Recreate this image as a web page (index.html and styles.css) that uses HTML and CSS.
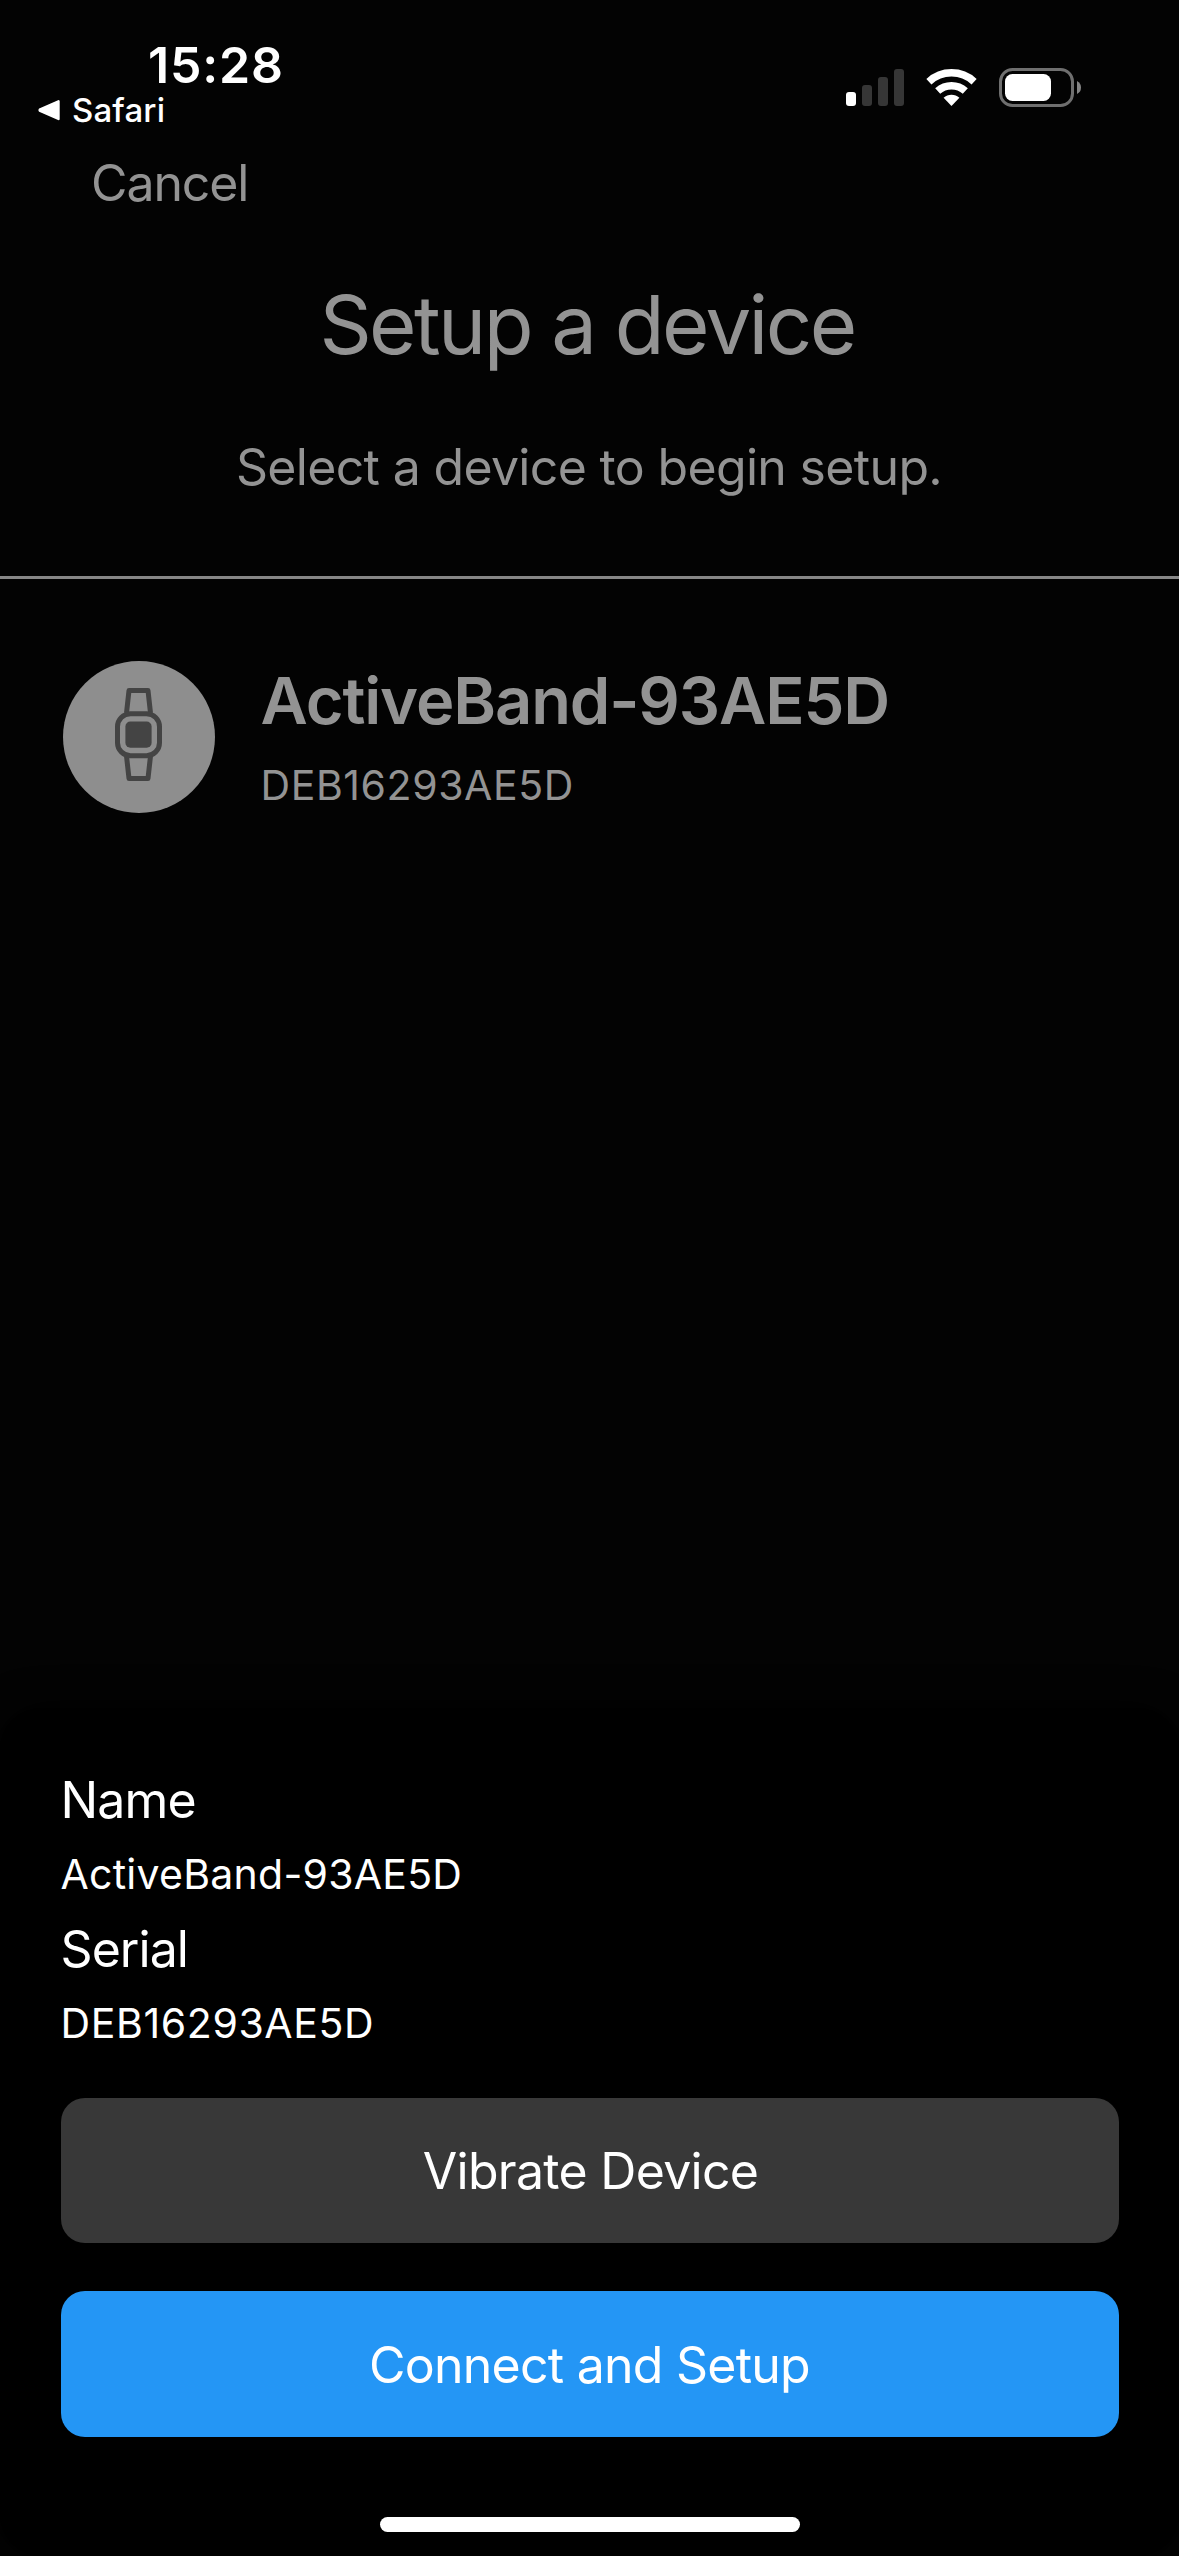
FILE: index.html
```
<!DOCTYPE html>
<html lang="en">
<head>
<meta charset="utf-8">
<title>Setup a device</title>
<link rel="stylesheet" href="styles.css">
</head>
<body>
<div class="screen">
  <header class="status-bar">
    <div class="status-left">
      <div class="time">15:28</div>
      <div class="back-app">
        <svg class="back-arrow" viewBox="0 0 22 22"><path d="M20.5 2.3V20L2.2 12Q1 11.2 2.2 10.3Z" fill="#fff" stroke="#fff" stroke-width="2.4" stroke-linejoin="round"/></svg>
        <span>Safari</span>
      </div>
    </div>
    <div class="status-icons">
      <svg class="signal" viewBox="0 0 58 37"><rect x="0" y="23" width="10" height="14" rx="3" fill="#fff"/><g fill="#363636"><rect x="16" y="16" width="10" height="21" rx="3"/><rect x="32" y="8" width="10" height="29" rx="3"/><rect x="48" y="0" width="10" height="37" rx="3"/></g></svg>
      <svg class="wifi" viewBox="0 0 51 37"><g fill="none" stroke="#fff" stroke-width="7.5"><path d="M2.9 12.7A33.3 33.3 0 0 1 48.1 12.7"/><path d="M11.7 22A20.5 20.5 0 0 1 39.3 22"/></g><path d="M25.5 37L17.6 28.8A11.5 11.5 0 0 1 33.4 28.8Z" fill="#fff"/></svg>
      <svg class="battery" viewBox="0 0 82 39"><rect x="1.5" y="1.5" width="72" height="36" rx="12" fill="none" stroke="#6f6f6f" stroke-width="3"/><rect x="6" y="6" width="46" height="27" rx="7.5" fill="#fff"/><path d="M78 13Q82 15 82 19.5T78 26Z" fill="#858585"/></svg>
    </div>
  </header>

  <nav class="nav"><a class="cancel">Cancel</a></nav>

  <section class="intro">
    <h1 class="title">Setup a device</h1>
    <p class="subtitle">Select a device to begin setup.</p>
  </section>

  <main class="devices">
    <div class="device">
      <div class="avatar">
        <svg class="watch" viewBox="0 0 47 93"><g fill="none" stroke="#444" stroke-width="5" stroke-linejoin="round"><path d="M11.5 25L14 2.5H33L35.5 25"/><path d="M11.5 68L14 90.5H33L35.5 68"/><rect x="2.5" y="25.7" width="42" height="42" rx="13"/></g><rect x="10.4" y="33.6" width="26.2" height="26.2" rx="5" fill="#444"/></svg>
      </div>
      <div class="device-text">
        <div class="device-name">ActiveBand-93AE5D</div>
        <div class="device-serial">DEB16293AE5D</div>
      </div>
    </div>
  </main>

  <section class="sheet">
    <dl class="details">
      <dt>Name</dt>
      <dd class="detail-name">ActiveBand-93AE5D</dd>
      <dt class="label-serial">Serial</dt>
      <dd class="detail-serial">DEB16293AE5D</dd>
    </dl>
    <button class="btn btn-secondary">Vibrate Device</button>
    <button class="btn btn-primary">Connect and Setup</button>
    <div class="home-indicator"></div>
  </section>
</div>
</body>
</html>
```
FILE: styles.css
```
* { box-sizing: border-box; }

body {
  margin: 0;
  background: #030303;
  font-family: Inter, "Liberation Sans", sans-serif;
  color: #fff;
}

.screen {
  width: 1179px;
  height: 2556px;
  display: flex;
  flex-direction: column;
  overflow: hidden;
  background: #030303;
}

.status-bar {
  display: flex;
  justify-content: space-between;
  align-items: flex-start;
  height: 153px;
  padding: 38px 98px 0 38px;
}

.time {
  padding-left: 110px;
  font-size: 50px;
  font-weight: 600;
  line-height: 54px;
  letter-spacing: 0.8px;
}

.back-app {
  display: flex;
  align-items: center;
  gap: 12px;
  font-size: 33px;
  font-weight: 450;
  line-height: 36px;
  letter-spacing: 0.15px;
}

.back-arrow { width: 22px; height: 22px; }

.status-icons {
  display: flex;
  align-items: center;
  padding-top: 30px;
}

.signal { width: 58px; height: 37px; }
.wifi { width: 51px; height: 37px; margin-left: 22px; }
.battery { width: 82px; height: 39px; margin-left: 22px; }

.nav {
  height: 122px;
  padding-left: 91px;
}

.cancel {
  font-size: 50px;
  line-height: 60px;
  letter-spacing: -1.1px;
  color: #939393;
}

.intro {
  height: 304px;
  text-align: center;
  color: #939393;
  border-bottom: 3px solid #878787;
}

.title {
  margin: 0;
  padding-right: 5px;
  font-size: 81.5px;
  font-weight: 400;
  line-height: 100px;
  letter-spacing: -2.6px;
}

.subtitle {
  margin: 62px 0 0;
  padding-right: 1px;
  font-size: 50px;
  line-height: 60px;
  letter-spacing: -0.67px;
}

.devices {
  flex: 1;
  padding: 82px 63px 0;
}

.device {
  display: flex;
  gap: 45.5px;
  color: #939393;
}

.avatar {
  width: 152px;
  height: 152px;
  padding: 0 1px 6px 0;
  display: flex;
  align-items: center;
  justify-content: center;
  border-radius: 50%;
  background: #8e8e8e;
}

.watch { width: 47px; height: 93px; }

.device-name {
  font-size: 65px;
  font-weight: 600;
  line-height: 80px;
  letter-spacing: -1.13px;
}

.device-serial {
  margin-top: 19px;
  font-size: 41px;
  line-height: 50px;
  letter-spacing: 0.58px;
}

.sheet {
  display: flex;
  flex-direction: column;
  height: 848px;
  padding: 61.5px 60.5px 24px;
  border-radius: 42px;
  background: #000;
  box-shadow: 0 0 36px #000;
}

.details {
  height: 328px;
  margin: 0;
  line-height: 50px;
}

.details dt {
  font-size: 50px;
  line-height: 60px;
  letter-spacing: -0.85px;
}

.details .label-serial {
  margin-top: 20px;
  letter-spacing: -0.95px;
}

.details dd {
  margin: 19px 0 0;
  font-size: 41px;
}

.detail-name { letter-spacing: 0.25px; }
.detail-serial { letter-spacing: 0.62px; }

.btn {
  flex: none;
  height: 145.5px;
  padding: 2px 0 0;
  border: 0;
  border-radius: 24px;
  font-family: inherit;
  font-size: 50px;
  color: #fff;
}

.btn-secondary {
  padding-left: 2px;
  background: #383838;
  letter-spacing: -0.71px;
}

.btn-primary {
  margin-top: 48px;
  background: #2496f5;
  letter-spacing: -0.76px;
}

.home-indicator {
  align-self: center;
  width: 420px;
  height: 15px;
  margin-top: auto;
  border-radius: 8px;
  background: #fff;
}
```
